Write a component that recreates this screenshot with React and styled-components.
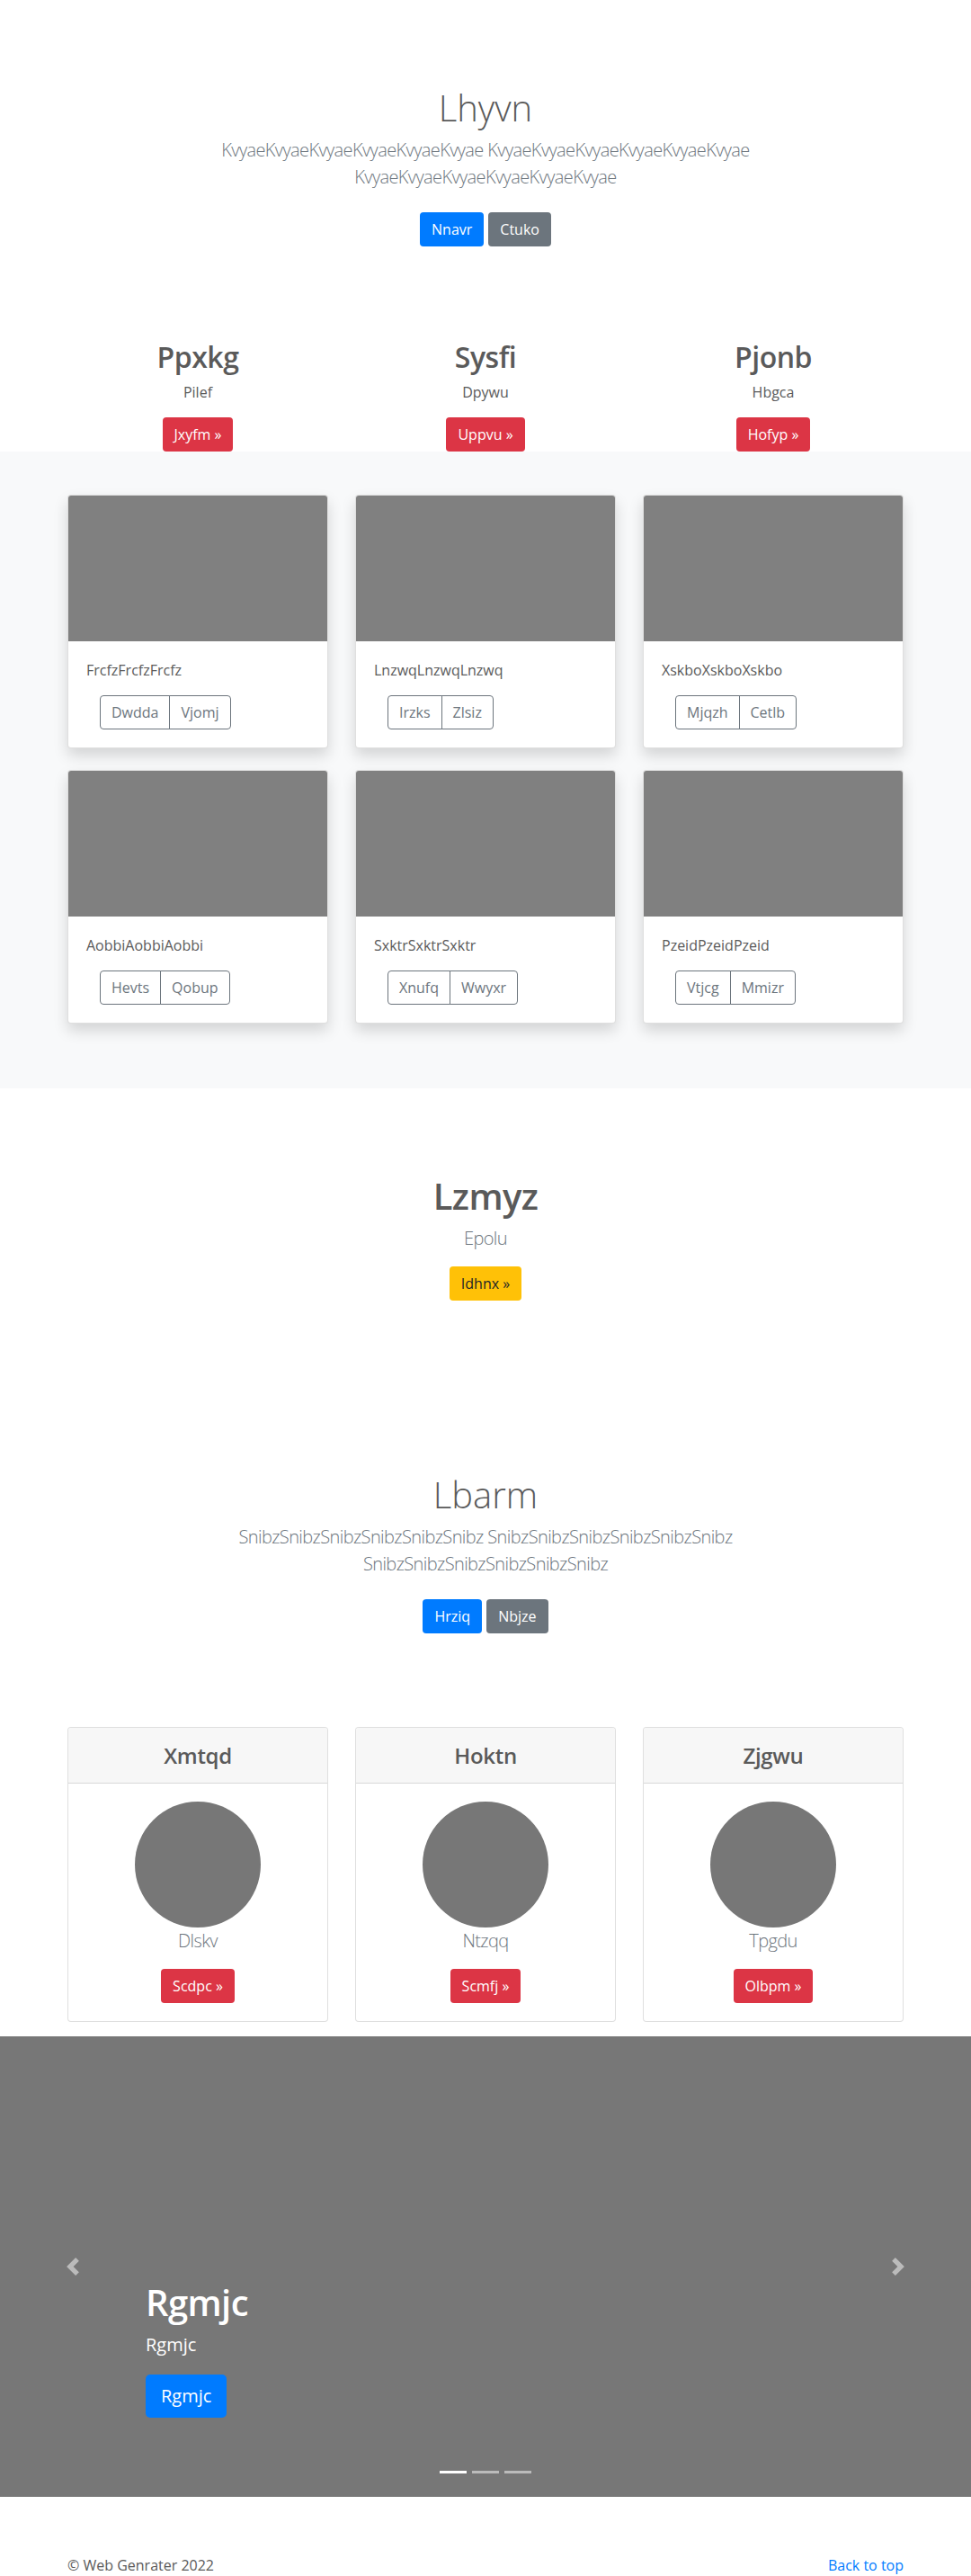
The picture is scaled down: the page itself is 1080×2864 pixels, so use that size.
import React from "react";
import styled, { createGlobalStyle, css } from "styled-components";

const Global = createGlobalStyle`
  *, *::before, *::after { box-sizing: border-box; }
  html, body { margin: 0; padding: 0; }
  body {
    font-family: "Segoe UI", "Open Sans", "Noto Sans", Arial, sans-serif;
    font-size: 16px;
    line-height: 1.5;
    color: #5a5a5a;
    background: #fff;
  }
`;

const palette = {
  primary: { bg: "#007bff", fg: "#fff" },
  secondary: { bg: "#6c757d", fg: "#fff" },
  danger: { bg: "#dc3545", fg: "#fff" },
  warning: { bg: "#ffc107", fg: "#212529" },
};

const Container = styled.div`
  max-width: ${(p) => (p.$narrow ? "720px" : "960px")};
  margin: 0 auto;
  padding: 0 15px;
`;

const Button = styled.a`
  display: inline-block;
  font-weight: 400;
  text-align: center;
  text-decoration: none;
  white-space: nowrap;
  border: 1px solid transparent;
  cursor: pointer;
  background: ${(p) => palette[p.$variant].bg};
  color: ${(p) => palette[p.$variant].fg};
  ${(p) =>
    p.$lg
      ? css`
          padding: 8px 16px;
          font-size: 20px;
          line-height: 30px;
          border-radius: 5px;
        `
      : css`
          padding: 6px 12px;
          font-size: 16px;
          line-height: 24px;
          border-radius: 4px;
        `}
`;

/* ---------- Hero ---------- */
const Hero = styled.section`
  padding: 96px 0 48px;
  text-align: center;
`;

const HeroTitle = styled.h1`
  font-size: 40px;
  font-weight: 300;
  line-height: 48px;
  margin: 0 0 8px;
`;

const Lead = styled.p`
  font-size: 20px;
  font-weight: 300;
  line-height: 30px;
  letter-spacing: -0.6px;
  color: #6c757d;
  margin: 0 0 16px;
`;

const Actions = styled.div`
  display: flex;
  justify-content: center;
  gap: 5px;
  padding: 8px 0;
  margin-bottom: 16px;
`;

function HeroBlock({ title, text, primary, secondary }) {
  return (
    <Hero>
      <Container $narrow>
        <HeroTitle>{title}</HeroTitle>
        <Lead>{text}</Lead>
        <Actions>
          <Button $variant="primary">{primary}</Button>
          <Button $variant="secondary">{secondary}</Button>
        </Actions>
      </Container>
    </Hero>
  );
}

/* ---------- Features ---------- */
const Features = styled.section`
  padding-top: 32px;
`;

const ThreeCols = styled.div`
  display: grid;
  grid-template-columns: repeat(3, 1fr);
  column-gap: 30px;
  row-gap: ${(p) => p.$rowGap || 0}px;
`;

const Feature = styled.div`
  display: flex;
  flex-direction: column;
  align-items: center;
  text-align: center;
`;

const FeatureTitle = styled.h2`
  font-size: 32px;
  font-weight: 600;
  line-height: 38px;
  letter-spacing: -0.5px;
  margin: 0 0 8px;
`;

const FeatureText = styled.p`
  margin: 0 0 16px;
`;

/* ---------- Album ---------- */
const Album = styled.section`
  background: #f8f9fa;
  padding: 48px 0 72px;
`;

const Card = styled.div`
  background: #fff;
  border: 1px solid rgba(0, 0, 0, 0.125);
  border-radius: 4px;
  overflow: hidden;
  box-shadow: 0 8px 16px rgba(0, 0, 0, 0.15);
`;

const Thumb = styled.div`
  height: 162px;
  background: #808080;
`;

const CardBody = styled.div`
  padding: 20px;
`;

const CardText = styled.p`
  margin: 0 0 16px;
`;

const BtnGroup = styled.div`
  display: inline-flex;
  margin-left: 15px;
`;

const OutlineBtn = styled.a`
  display: inline-block;
  padding: 6px 12px;
  font-size: 16px;
  line-height: 24px;
  color: #6c757d;
  border: 1px solid #6c757d;
  text-decoration: none;
  &:first-child {
    border-radius: 4px 0 0 4px;
  }
  &:last-child {
    border-radius: 0 4px 4px 0;
    margin-left: -1px;
  }
`;

/* ---------- Promo ---------- */
const Promo = styled.section`
  padding: 96px 0;
`;

const Centered = styled.div`
  display: flex;
  flex-direction: column;
  align-items: center;
  text-align: center;
`;

const PromoTitle = styled.h1`
  font-size: 40px;
  font-weight: 600;
  line-height: 48px;
  letter-spacing: -0.6px;
  margin: 0 0 8px;
`;

/* ---------- Pricing ---------- */
const Pricing = styled.section`
  padding: 32px 0 16px;
`;

const PriceCard = styled.div`
  border: 1px solid rgba(0, 0, 0, 0.125);
  border-radius: 4px;
  overflow: hidden;
  background: #fff;
`;

const PriceHeader = styled.div`
  background: #f7f7f7;
  padding: 16px 20px;
  border-bottom: 1px solid rgba(0, 0, 0, 0.125);
  text-align: center;
`;

const PriceTitle = styled.h4`
  font-size: 24px;
  font-weight: 600;
  line-height: 29px;
  letter-spacing: -0.3px;
  margin: 0;
`;

const PriceBody = styled(Centered)`
  padding: 20px;
`;

const Avatar = styled.div`
  width: 140px;
  height: 140px;
  border-radius: 50%;
  background: #777;
`;

/* ---------- Carousel ---------- */
const Carousel = styled.div`
  position: relative;
  height: 512px;
  background: #777;
  margin-bottom: 64px;
  overflow: hidden;
`;

const Caption = styled.div`
  position: absolute;
  top: 272px;
  left: 15%;
  right: 15%;
  color: #fff;
  text-align: left;
`;

const CaptionTitle = styled.h1`
  font-size: 40px;
  font-weight: 600;
  line-height: 48px;
  letter-spacing: -0.6px;
  margin: 0 0 8px;
`;

const CaptionText = styled.p`
  font-size: 20px;
  line-height: 30px;
  margin: 0 0 18px;
`;

const Control = styled.a`
  position: absolute;
  top: 0;
  bottom: 0;
  width: 15%;
  ${(p) => (p.$side === "left" ? "left: 0;" : "right: 0;")}
  display: flex;
  align-items: center;
  justify-content: center;
  opacity: 0.5;
`;

const Indicators = styled.ol`
  position: absolute;
  left: 0;
  right: 0;
  bottom: 0;
  display: flex;
  justify-content: center;
  list-style: none;
  padding: 0;
  margin: 0 0 16px;
`;

const Indicator = styled.li`
  box-sizing: content-box;
  width: 30px;
  height: 3px;
  margin: 0 3px;
  background: #fff;
  background-clip: padding-box;
  border-top: 10px solid transparent;
  border-bottom: 10px solid transparent;
  opacity: ${(p) => (p.$active ? 1 : 0.5)};
`;

/* ---------- Footer ---------- */
const Footer = styled.footer`
  display: flex;
  justify-content: space-between;
  line-height: 24px;
  height: 24px;
`;

const FooterLink = styled.a`
  color: #007bff;
  text-decoration: none;
`;

const Chevron = ({ dir }) => (
  <svg width="20" height="20" viewBox="0 0 8 8" fill="#fff">
    <path
      d={
        dir === "left"
          ? "M5.25 0l-4 4 4 4 1.5-1.5L4.25 4l2.5-2.5L5.25 0z"
          : "M2.75 0l-1.5 1.5L3.75 4l-2.5 2.5L2.75 8l4-4-4-4z"
      }
    />
  </svg>
);

const features = [
  { t: "Ppxkg", s: "Pilef", b: "Jxyfm »" },
  { t: "Sysfi", s: "Dpywu", b: "Uppvu »" },
  { t: "Pjonb", s: "Hbgca", b: "Hofyp »" },
];

const albums = [
  { t: "FrcfzFrcfzFrcfz", a: "Dwdda", b: "Vjomj" },
  { t: "LnzwqLnzwqLnzwq", a: "Irzks", b: "Zlsiz" },
  { t: "XskboXskboXskbo", a: "Mjqzh", b: "Cetlb" },
  { t: "AobbiAobbiAobbi", a: "Hevts", b: "Qobup" },
  { t: "SxktrSxktrSxktr", a: "Xnufq", b: "Wwyxr" },
  { t: "PzeidPzeidPzeid", a: "Vtjcg", b: "Mmizr" },
];

const prices = [
  { h: "Xmtqd", s: "Dlskv", b: "Scdpc »" },
  { h: "Hoktn", s: "Ntzqq", b: "Scmfj »" },
  { h: "Zjgwu", s: "Tpgdu", b: "Olbpm »" },
];

const k = "Kvyae".repeat(6);
const sn = "Snibz".repeat(6);

export default function App() {
  return (
    <>
      <Global />
      <HeroBlock
        title="Lhyvn"
        text={`${k} ${k} ${k}`}
        primary="Nnavr"
        secondary="Ctuko"
      />

      <Features>
        <Container>
          <ThreeCols>
            {features.map((f) => (
              <Feature key={f.t}>
                <FeatureTitle>{f.t}</FeatureTitle>
                <FeatureText>{f.s}</FeatureText>
                <Button $variant="danger">{f.b}</Button>
              </Feature>
            ))}
          </ThreeCols>
        </Container>
      </Features>

      <Album>
        <Container>
          <ThreeCols $rowGap={24}>
            {albums.map((c) => (
              <Card key={c.t}>
                <Thumb />
                <CardBody>
                  <CardText>{c.t}</CardText>
                  <BtnGroup>
                    <OutlineBtn>{c.a}</OutlineBtn>
                    <OutlineBtn>{c.b}</OutlineBtn>
                  </BtnGroup>
                </CardBody>
              </Card>
            ))}
          </ThreeCols>
        </Container>
      </Album>

      <Promo>
        <Container>
          <Centered>
            <PromoTitle>Lzmyz</PromoTitle>
            <Lead>Epolu</Lead>
            <Button $variant="warning">Idhnx »</Button>
          </Centered>
        </Container>
      </Promo>

      <HeroBlock
        title="Lbarm"
        text={`${sn} ${sn} ${sn}`}
        primary="Hrziq"
        secondary="Nbjze"
      />

      <Pricing>
        <Container>
          <ThreeCols>
            {prices.map((p) => (
              <PriceCard key={p.h}>
                <PriceHeader>
                  <PriceTitle>{p.h}</PriceTitle>
                </PriceHeader>
                <PriceBody>
                  <Avatar />
                  <Lead>{p.s}</Lead>
                  <Button $variant="danger">{p.b}</Button>
                </PriceBody>
              </PriceCard>
            ))}
          </ThreeCols>
        </Container>
      </Pricing>

      <Carousel>
        <Control $side="left">
          <Chevron dir="left" />
        </Control>
        <Caption>
          <CaptionTitle>Rgmjc</CaptionTitle>
          <CaptionText>Rgmjc</CaptionText>
          <Button $variant="primary" $lg>
            Rgmjc
          </Button>
        </Caption>
        <Control $side="right">
          <Chevron dir="right" />
        </Control>
        <Indicators>
          <Indicator $active />
          <Indicator />
          <Indicator />
        </Indicators>
      </Carousel>

      <Container>
        <Footer>
          <span>© Web Genrater 2022</span>
          <FooterLink href="#">Back to top</FooterLink>
        </Footer>
      </Container>
    </>
  );
}
